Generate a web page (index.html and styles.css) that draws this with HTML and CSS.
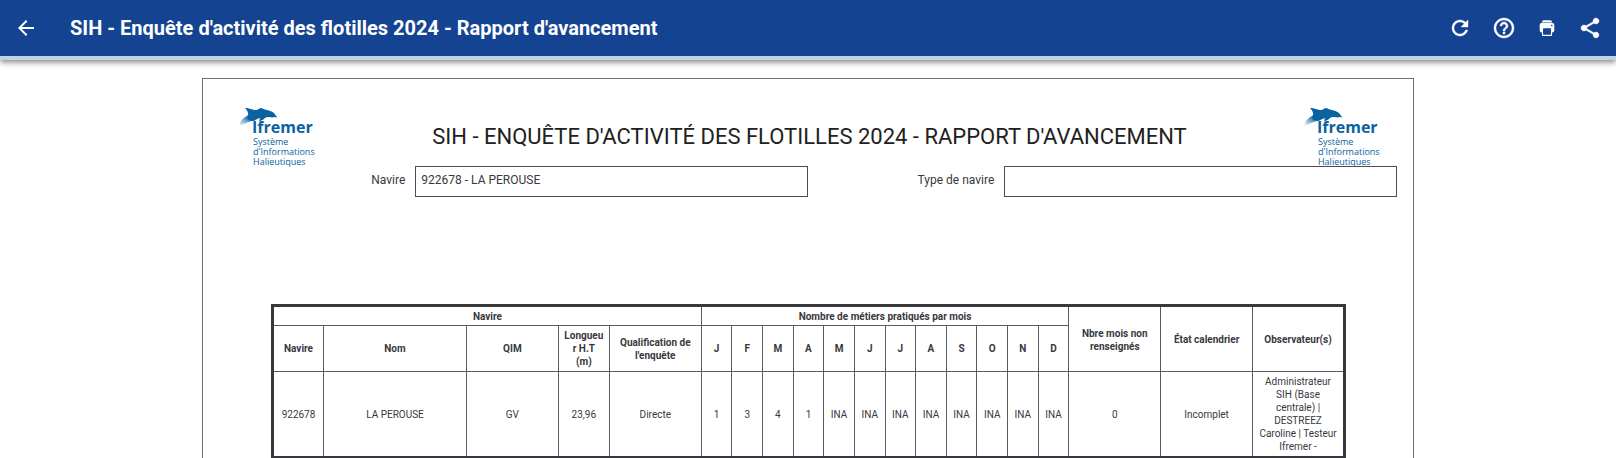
FILE: index.html
```html
<!DOCTYPE html>
<html lang="fr">
<head>
<meta charset="utf-8">
<title>SIH - Enquête d'activité des flotilles 2024 - Rapport d'avancement</title>
<link rel="stylesheet" href="styles.css">
</head>
<body>
<svg class="defs" aria-hidden="true">
  <defs>
    <linearGradient id="tail" x1="1" y1="0" x2="0" y2="1">
      <stop offset="0.3" stop-color="#0a62a0"/>
      <stop offset="1" stop-color="#0a62a0" stop-opacity="0"/>
    </linearGradient>
    <symbol id="dolphin" viewBox="0 0 40 20">
      <path fill="url(#tail)" d="M10 7 17 13C13 14 9 15 7 16L1 19C-1 16 4 11 8 9Z"/>
      <path fill="#0a62a0" d="M6 1C11 1 13 3 17 3C19 3 20 1 23 1C23 2 25 2 28 3C33 4 36 6 37 9C39 10 38 11 36 10C33 11 31 10 28 10C25 11 24 14 20 14C20 13 21 12 21 11C18 12 17 13 13 14L8 12C10 9 10 5 6 1Z"/>
    </symbol>
  </defs>
</svg>
<header class="toolbar">
  <button class="icon-button" type="button" aria-label="Retour">
    <svg class="icon" viewBox="0 0 24 24"><path d="M20 11H7.83l5.59-5.59L12 4l-8 8 8 8 1.41-1.41L7.83 13H20v-2z"/></svg>
  </button>
  <h1 class="toolbar-title">SIH - Enquête d'activité des flotilles 2024 - Rapport d'avancement</h1>
  <div class="actions">
    <button class="icon-button" type="button" aria-label="Actualiser">
      <svg class="icon bold" viewBox="0 0 24 24"><path d="M17.65 6.35C16.2 4.9 14.21 4 12 4c-4.42 0-7.99 3.58-7.99 8s3.57 8 7.99 8c3.73 0 6.84-2.55 7.73-6h-2.08c-.82 2.33-3.04 4-5.65 4-3.31 0-6-2.69-6-6s2.69-6 6-6c1.66 0 3.14.69 4.22 1.78L13 11h7V4l-2.35 2.35z"/></svg>
    </button>
    <button class="icon-button" type="button" aria-label="Aide">
      <svg class="icon bold" viewBox="0 0 24 24"><path d="M11 18h2v-2h-2v2zm1-16C6.48 2 2 6.48 2 12s4.48 10 10 10 10-4.48 10-10S17.52 2 12 2zm0 18c-4.41 0-8-3.59-8-8s3.59-8 8-8 8 3.59 8 8-3.59 8-8 8zm0-14c-2.21 0-4 1.79-4 4h2c0-1.1.9-2 2-2s2 .9 2 2c0 2-3 1.75-3 5h2c0-2.25 3-2.5 3-5 0-2.21-1.79-4-4-4z"/></svg>
    </button>
    <button class="icon-button small" type="button" aria-label="Imprimer">
      <svg class="icon" viewBox="0 0 512 512"><path fill-rule="evenodd" d="M408 112H106a56 56 0 0 0-58 56v158a56 56 0 0 0 56 56h8v72a26 26 0 0 0 26 26h236a26 26 0 0 0 26-26v-72h8a56 56 0 0 0 56-56V168a56 56 0 0 0-56-56zM368 444a4 4 0 0 1-4 4H148a4 4 0 0 1-4-4V268a4 4 0 0 1 4-4h216a4 4 0 0 1 4 4zm26-236a24 24 0 1 1 22-22 24 24 0 0 1-22 22z"/><path d="M344 32H168a56 56 0 0 0-56 56v8h288v-8a56 56 0 0 0-56-56z"/></svg>
    </button>
    <button class="icon-button" type="button" aria-label="Partager">
      <svg class="icon bold" viewBox="0 0 24 24"><path d="M18 16.08c-.76 0-1.44.3-1.96.77L8.91 12.7c.05-.23.09-.46.09-.7s-.04-.47-.09-.7l7.05-4.11c.54.5 1.25.81 2.04.81 1.66 0 3-1.34 3-3s-1.34-3-3-3-3 1.34-3 3c0 .24.04.47.09.7L8.04 9.81C7.5 9.31 6.79 9 6 9c-1.66 0-3 1.34-3 3s1.34 3 3 3c.79 0 1.5-.31 2.04-.81l7.12 4.16c-.05.21-.08.43-.08.65 0 1.61 1.31 2.92 2.92 2.92s2.92-1.31 2.92-2.92-1.31-2.92-2.92-2.92z"/></svg>
    </button>
  </div>
</header>
<main class="content">
  <section class="sheet">
    <div class="sheet-header">
      <div class="logo">
        <svg class="logo-mark"><use href="#dolphin"/></svg>
        <div class="logo-name">Ifremer</div>
        <div class="logo-sub">Système<br>d'Informations<br>Halieutiques</div>
      </div>
      <h2 class="sheet-title">SIH - ENQUÊTE D'ACTIVITÉ DES FLOTILLES 2024 - RAPPORT D'AVANCEMENT</h2>
      <div class="logo">
        <svg class="logo-mark"><use href="#dolphin"/></svg>
        <div class="logo-name">Ifremer</div>
        <div class="logo-sub">Système<br>d'Informations<br>Halieutiques</div>
      </div>
    </div>
    <div class="fields">
      <div class="field">
        <label for="vessel">Navire</label>
        <input id="vessel" type="text" value="922678 - LA PEROUSE" readonly>
      </div>
      <div class="field">
        <label for="vessel-type">Type de navire</label>
        <input id="vessel-type" type="text" value="" readonly>
      </div>
    </div>
    <table class="report">
      <colgroup>
        <col class="w5"><col class="w14"><col class="w9"><col class="w5"><col class="w9">
        <col class="w3" span="12">
        <col class="w9" span="3">
      </colgroup>
      <thead>
        <tr class="groups">
          <th colspan="5">Navire</th>
          <th colspan="12">Nombre de métiers pratiqués par mois</th>
          <th rowspan="2">Nbre mois non renseignés</th>
          <th rowspan="2">État calendrier</th>
          <th rowspan="2">Observateur(s)</th>
        </tr>
        <tr class="columns">
          <th>Navire</th><th>Nom</th><th>QIM</th><th>Longueur H.T<br>(m)</th><th>Qualification de l'enquête</th>
          <th>J</th><th>F</th><th>M</th><th>A</th><th>M</th><th>J</th><th>J</th><th>A</th><th>S</th><th>O</th><th>N</th><th>D</th>
        </tr>
      </thead>
      <tbody>
        <tr>
          <td>922678</td><td>LA PEROUSE</td><td>GV</td><td>23,96</td><td>Directe</td>
          <td>1</td><td>3</td><td>4</td><td>1</td><td>INA</td><td>INA</td><td>INA</td><td>INA</td><td>INA</td><td>INA</td><td>INA</td><td>INA</td>
          <td>0</td><td>Incomplet</td><td>Administrateur SIH (Base centrale) | DESTREEZ Caroline | Testeur Ifremer -</td>
        </tr>
      </tbody>
    </table>
  </section>
</main>
</body>
</html>
```

FILE: styles.css
```css
* {
  box-sizing: border-box;
}

body {
  display: flex;
  flex-direction: column;
  height: 100vh;
  margin: 0;
  overflow: hidden;
  background: #fff;
  color: #38383d;
  font-family: Roboto, "Liberation Sans", sans-serif;
}

.defs {
  position: absolute;
  width: 0;
  height: 0;
}

.toolbar {
  display: flex;
  flex: none;
  align-items: center;
  height: 60px;
  padding: 0 14px;
  border-bottom: 4px solid #c4d0e4;
  background: #144391;
  box-shadow: 0 2px 4px -1px rgba(0, 0, 0, 0.3), 0 4px 5px 0 rgba(0, 0, 0, 0.16), 0 1px 10px 0 rgba(0, 0, 0, 0.12);
  color: #fff;
}

.icon-button {
  display: grid;
  place-items: center;
  width: 24px;
  height: 24px;
  padding: 0;
  border: 0;
  background: none;
  color: inherit;
}

.icon-button.small {
  width: 22px;
}

.icon {
  display: block;
  width: 24px;
  height: 24px;
  fill: currentColor;
}

.icon.bold {
  stroke: currentColor;
  stroke-width: 0.4;
}

.icon-button.small .icon {
  width: 18px;
  height: 18px;
}

.toolbar-title {
  flex: 1;
  margin: 0 0 0 32px;
  font-size: 20px;
  font-weight: 700;
  line-height: 24px;
}

.actions {
  display: flex;
  align-items: center;
  gap: 20px;
}

.content {
  flex: 1;
  min-height: 0;
  padding-top: 18px;
}

.sheet {
  width: 75%;
  height: 100%;
  margin: 0 auto;
  padding-top: 28px;
  border: 1px solid #6e6e72;
  border-bottom: 0;
}

.sheet-header {
  display: flex;
  justify-content: space-between;
  height: 59px;
  padding: 0 33px 0 36px;
}

.logo {
  width: 76px;
  color: #0a62a0;
}

.logo-mark {
  display: block;
  width: 40px;
  height: 20px;
}

.logo-name {
  margin: -10px 0 0 13px;
  font: bold 16px/20px "Open Sans", sans-serif;
}

.logo-sub {
  margin-left: 14px;
  font: 9px/10px "Open Sans", sans-serif;
  white-space: nowrap;
}

.sheet-title {
  margin: 16px 0 0;
  color: #212121;
  font-size: 22px;
  font-weight: 400;
  line-height: 28px;
}

.fields {
  position: relative;
  display: grid;
  grid-template-columns: 1fr 1fr;
  padding: 0 16px;
}

.field {
  display: grid;
  grid-template-columns: 1fr 2fr;
  font-size: 12px;
  line-height: 28px;
}

.field label {
  padding-right: 10px;
  text-align: right;
}

.field input {
  width: 100%;
  height: 31px;
  padding: 0 5px 3px;
  border: 1px solid #4c4c52;
  background: #fff;
  color: inherit;
  font: inherit;
}

.report {
  width: calc(100% - 135px);
  margin: 107px 67px 0 68px;
  border: 3px solid #38383d;
  border-collapse: collapse;
  table-layout: fixed;
  font-size: 10px;
  line-height: 13px;
  text-align: center;
}

.report th,
.report td {
  padding: 3px 4px;
  border: 1px solid #5a5a5f;
  overflow-wrap: anywhere;
}

.report th {
  font-weight: 700;
}

.report .groups th {
  padding: 3px 4px 2px;
}

.w3 {
  width: 30px;
}

.w5 {
  width: 50px;
}

.w9 {
  width: 90px;
}

.w14 {
  width: 140px;
}
```
